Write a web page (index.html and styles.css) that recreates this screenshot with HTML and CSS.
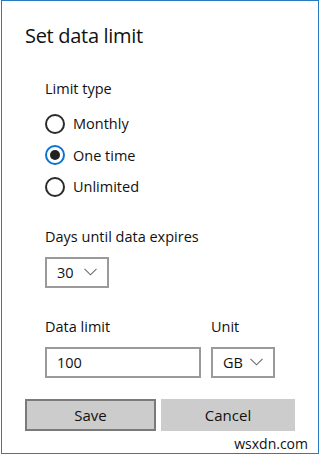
FILE: index.html
```html
<!DOCTYPE html>
<html lang="en">
<head>
  <meta charset="UTF-8" />
  <meta name="viewport" content="width=device-width, initial-scale=1.0"/>
  <title>Set data limit</title>
  <link rel="stylesheet" href="styles.css">
</head>
<body>
  <div class="window">
    <div class="title">Set data limit</div>

    <div class="content">
      <div class="label">Limit type</div>
      <div class="radio-group">
        <div class="radio-row">
          <span class="radio"></span>
          <span class="radio-text">Monthly</span>
        </div>
        <div class="radio-row">
          <span class="radio checked"></span>
          <span class="radio-text">One time</span>
        </div>
        <div class="radio-row">
          <span class="radio"></span>
          <span class="radio-text">Unlimited</span>
        </div>
      </div>

      <div class="label days-label">Days until data expires</div>
      <div class="select days-select">
        <span>30</span>
        <svg class="chevron" width="13" height="8" viewBox="0 0 13 8">
          <path d="M0.5 0.8 L6.5 6.8 L12.5 0.8" fill="none" stroke="#6b6b6b" stroke-width="1.1"/>
        </svg>
      </div>

      <div class="limit-grid">
        <div class="label">Data limit</div>
        <div class="label">Unit</div>
        <div class="textbox">100</div>
        <div class="select unit-select">
          <span>GB</span>
          <svg class="chevron" width="13" height="8" viewBox="0 0 13 8">
            <path d="M0.5 0.8 L6.5 6.8 L12.5 0.8" fill="none" stroke="#6b6b6b" stroke-width="1.1"/>
          </svg>
        </div>
      </div>
    </div>

    <div class="buttons">
      <button class="btn btn-save">Save</button>
      <button class="btn">Cancel</button>
    </div>

    <div class="watermark">wsxdn.com</div>
  </div>
</body>
</html>
```

FILE: styles.css
```css
body {
    margin: 0;
    background: #fff;
    font-family: "Open Sans", "Noto Sans", sans-serif;
    color: #111;
}
.window {
    position: relative;
    box-sizing: border-box;
    width: 318px;
    height: 454px;
    margin-left: 1px;
    border: 1px solid #2a7bc6;
    padding: 21px 23px 0 23px;
    background: #fff;
}
.title {
    font-size: 20px;
    line-height: 28px;
    letter-spacing: -0.3px;
}
.content {
    padding-left: 20px;
}
.label {
    font-size: 14.5px;
    line-height: 20px;
}
.content > .label:first-child {
    margin-top: 29px;
}
.radio-group {
    margin-top: 9px;
}
.radio-row {
    display: flex;
    align-items: center;
    height: 31.5px;
}
.radio {
    box-sizing: border-box;
    width: 20px;
    height: 20px;
    border: 2px solid #2b2b2b;
    border-radius: 50%;
    display: flex;
    align-items: center;
    justify-content: center;
}
.radio.checked {
    border-color: #0a74d0;
}
.radio.checked::after {
    content: "";
    width: 10px;
    height: 10px;
    border-radius: 50%;
    background: #222;
}
.radio-text {
    margin-left: 8px;
    font-size: 14.5px;
}
.days-label {
    margin-top: 24px;
}
.select,
.textbox {
    box-sizing: border-box;
    height: 31px;
    border: 2px solid #9a9a9a;
    display: flex;
    align-items: center;
    font-size: 14.5px;
    padding-left: 10px;
}
.select .chevron {
    margin-left: auto;
    margin-right: 10px;
}
.days-select {
    width: 64px;
    margin-top: 10px;
}
.limit-grid {
    display: grid;
    grid-template-columns: 156px 64px;
    column-gap: 10px;
    row-gap: 10px;
    margin-top: 29px;
}
.buttons {
    display: grid;
    grid-template-columns: 131px 1fr;
    column-gap: 5px;
    margin-top: 21px;
}
.btn {
    box-sizing: border-box;
    height: 32px;
    border: 2px solid #ccc;
    background: #ccc;
    font-family: inherit;
    font-size: 15px;
    color: #111;
    padding: 0;
}
.btn-save {
    border-color: #7a7a7a;
}
.watermark {
    position: absolute;
    right: 10px;
    bottom: 0;
    font-size: 14px;
    color: #111;
}
```
